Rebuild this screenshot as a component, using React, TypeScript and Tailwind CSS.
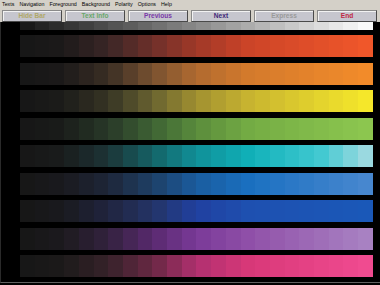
import React from "react";

type Stop = [number, string];

const BARS: Stop[][] = [
  [[0, "#161616"], [0.12, "#1c1a1a"], [0.25, "#3a2626"], [0.38, "#70302a"], [0.5, "#a03828"], [0.65, "#cc4428"], [1, "#f2582a"]],
  [[0, "#161616"], [0.12, "#1c1a1a"], [0.25, "#3a2e24"], [0.38, "#7a5230"], [0.5, "#b06a30"], [0.65, "#d47a2c"], [1, "#f48c2a"]],
  [[0, "#161616"], [0.12, "#1c1c1a"], [0.25, "#363424"], [0.38, "#6a6430"], [0.5, "#a09030"], [0.65, "#c8b430"], [1, "#f8ea2a"]],
  [[0, "#161616"], [0.12, "#1a1c1a"], [0.25, "#283828"], [0.38, "#3e6434"], [0.5, "#5a8c3c"], [0.65, "#74ac44"], [1, "#8ec850"]],
  [[0, "#161616"], [0.12, "#1a1c1c"], [0.25, "#1c3436"], [0.38, "#146468"], [0.5, "#109098"], [0.65, "#10b0b8"], [0.85, "#40c8d0"], [1, "#a8dce2"]],
  [[0, "#161616"], [0.12, "#1a1a1e"], [0.25, "#1e2638"], [0.38, "#1e4068"], [0.5, "#1a5c9e"], [0.65, "#1a70c0"], [1, "#4a88d0"]],
  [[0, "#161616"], [0.12, "#1a1a1e"], [0.25, "#20243e"], [0.38, "#243468"], [0.5, "#2040a0"], [0.65, "#1e50b0"], [1, "#1a58b8"]],
  [[0, "#161616"], [0.12, "#1c1a1e"], [0.25, "#33223e"], [0.38, "#5a2a70"], [0.5, "#7a3a98"], [0.65, "#9050a8"], [1, "#aa84c4"]],
  [[0, "#161616"], [0.12, "#1c1a1a"], [0.25, "#36222a"], [0.38, "#6a2844"], [0.5, "#b03070"], [0.65, "#d83878"], [1, "#f24c92"]],
];

const GRAY: Stop[] = [[0, "#141414"], [1, "#ffffff"]];

function hexToRgb(h: string): number[] {
  const n = parseInt(h.slice(1), 16);
  return [(n >> 16) & 255, (n >> 8) & 255, n & 255];
}

function colorAt(stops: Stop[], t: number): string {
  for (let i = 0; i < stops.length - 1; i++) {
    const [t0, c0] = stops[i];
    const [t1, c1] = stops[i + 1];
    if (t >= t0 && t <= t1) {
      const f = (t - t0) / (t1 - t0);
      const a = hexToRgb(c0);
      const b = hexToRgb(c1);
      const r = a.map((v, k) => Math.round(v + (b[k] - v) * f));
      return `rgb(${r[0]},${r[1]},${r[2]})`;
    }
  }
  return stops[stops.length - 1][1];
}

const STEPS = 24;

function Bar({ stops, className }: { stops: Stop[]; className: string }) {
  const cells = Array.from({ length: STEPS }, (_, i) => colorAt(stops, (i + 0.5) / STEPS));
  return (
    <div className={`flex ${className}`}>
      {cells.map((c, i) => (
        <div key={i} className="flex-1" style={{ backgroundColor: c }} />
      ))}
    </div>
  );
}

const MENU = ["Texts", "Navigation", "Foreground", "Background", "Polarity", "Options", "Help"];

const BUTTONS: { label: string; cls: string }[] = [
  { label: "Hide Bar", cls: "text-[#b0a868]" },
  { label: "Text Info", cls: "text-[#6aa86a]" },
  { label: "Previous", cls: "text-[#7a38a8]" },
  { label: "Next", cls: "text-[#3e2878]" },
  { label: "Express", cls: "text-[#9a9a9a]" },
  { label: "End", cls: "text-[#c02844]" },
];

export default function App() {
  return (
    <div className="w-[380px] h-[285px] bg-black flex flex-col overflow-hidden font-['Liberation_Sans',Arial,sans-serif]">
      <div className="bg-[#d4d0c8] h-[22px] flex flex-col shrink-0">
        <div className="h-[10px] flex items-center gap-[5px] pl-[2px] text-[5.3px] leading-none text-black">
          {MENU.map((m) => (
            <span key={m}>{m}</span>
          ))}
        </div>
        <div className="h-[12px] flex gap-[3px] pl-[2px]">
          {BUTTONS.map((b) => (
            <div
              key={b.label}
              className={`w-[60px] h-[12px] flex items-center justify-center bg-[#c6c6ce] border border-t-[#8a8a8a] border-l-[#8a8a8a] border-b-[#4a4a4a] border-r-[#4a4a4a] shadow-[inset_1px_1px_0_#f2f2f2] text-[6.6px] font-bold leading-none ${b.cls}`}
            >
              {b.label}
            </div>
          ))}
        </div>
      </div>
      <div className="h-[261px] shrink-0 border-l border-b border-l-[#2a2a2a] border-b-[#606060] overflow-hidden">
        <div className="flex flex-col gap-[5.5px] pl-[19px] pr-[7px]">
          <Bar stops={GRAY} className="h-[7.5px]" />
          {BARS.map((s, i) => (
            <Bar key={i} stops={s} className="h-[22px]" />
          ))}
        </div>
      </div>
    </div>
  );
}
